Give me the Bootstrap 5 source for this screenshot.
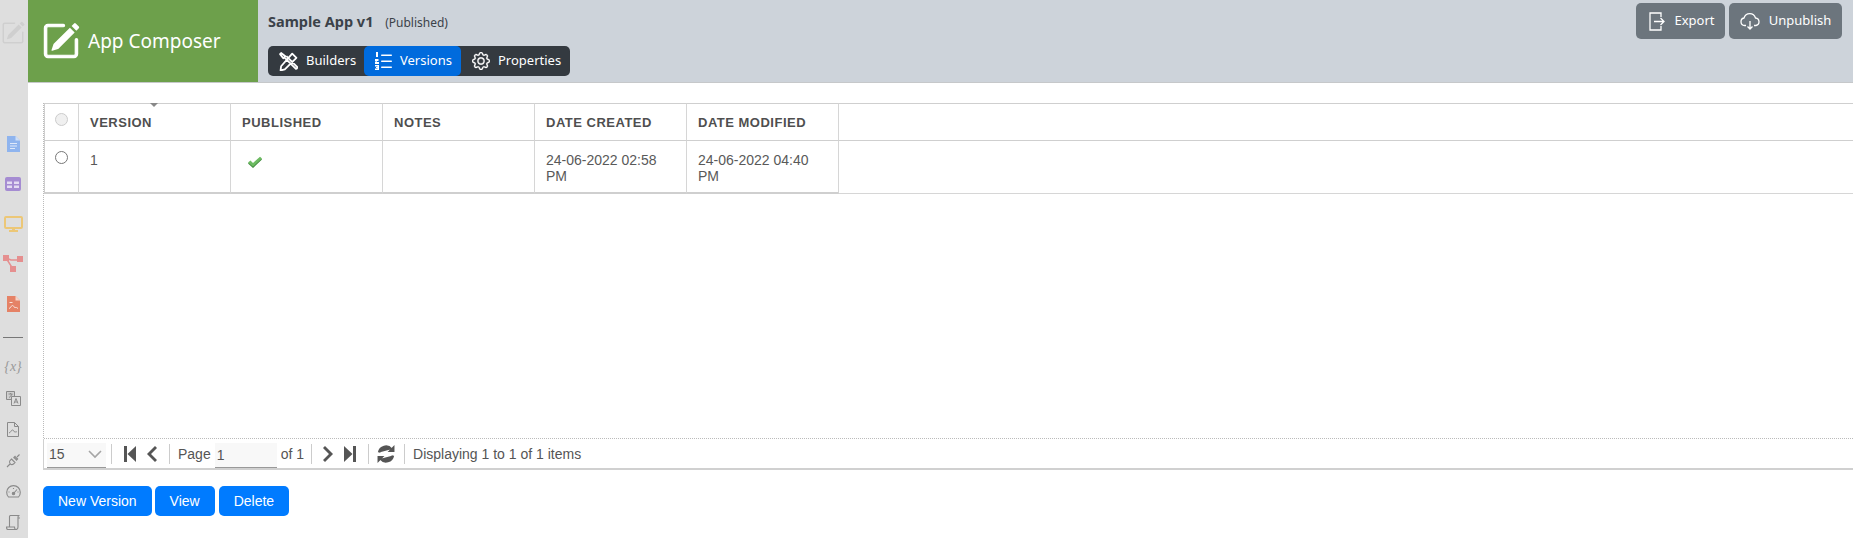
<!DOCTYPE html>
<html lang="en">
<head>
<meta charset="utf-8">
<title>App Composer</title>
<link href="https://cdn.jsdelivr.net/npm/bootstrap@5.3.0/dist/css/bootstrap.min.css" rel="stylesheet">
<style>
html,body{height:100%;overflow:hidden;background:#fff}
body{font-family:"Liberation Sans",Arial,sans-serif;font-size:14px;color:#555}
.side-rail{width:28px;background:#dedede;flex:none;height:538px;overflow:hidden;padding-right:2px}
.rail-top{height:125px;padding-top:21px}
.rail-slot{height:40px}
.rail-tool{height:31.2px}
.rail-rule{width:20px;height:1px;background:#777;margin:13px 0 14px 0;flex:none}
.top-bar{height:83px;background:#cdd3da;border-bottom:1px solid #c6c8ca;font-family:"Noto Sans","Open Sans",sans-serif}
.brand-box{width:230px;height:82px;background:#6da04b;color:#fff;padding-left:13px;gap:7px}
.brand-name{font-size:19px;line-height:1}
.app-title{font-size:14.5px;font-weight:700;color:#3b4249;line-height:20px;padding-top:11px;height:46px}
.app-state{font-size:12px;font-weight:400;margin-left:8px}
.view-tabs{height:30px;background:#343a40;border-radius:5px;overflow:hidden}
.view-tab{display:flex;align-items:center;gap:8px;height:30px;color:#fff;font-size:13px;padding:0 0 0 11px;border-radius:5px;text-decoration:none}
.view-tab.on{background:#006bdd}
.tab-a{width:96px}.tab-b{width:97px}.tab-c{width:109px}
.tab-title-col{padding-left:10px}
.act-btn{height:36px;background:#6c757d;border:0;border-radius:5px;color:#fff;font-size:13px;display:flex;align-items:center;gap:9px;padding:0;justify-content:center}
.act-export{width:89px;padding-left:3px}.act-unpub{width:113px}
.act-wrap{padding:3px 11px 0 0;gap:4px}
.grid-zone{padding:20px 0 0 15px}
.grid-box{height:367px;border-left:1px dotted #bbb;position:relative}
.grid-body{height:336px;border-bottom:1px dotted #bbb}
.data-grid{table-layout:fixed;width:100%;border-collapse:separate;border-spacing:0;margin:0}
.data-grid th,.data-grid td{border:0;padding:0;vertical-align:top;background:transparent;box-shadow:none}
.data-grid th{height:37.500px;border-top:1px solid #cfcfcf;border-bottom:1px solid #cfcfcf;border-right:1px solid #d6d6d6;font-size:13px;letter-spacing:.5px;font-weight:700;color:#4f4f4f;text-transform:uppercase;padding:11px 0 0 11px;line-height:16px}
.data-grid td{height:53px;border-bottom:2px solid #cfcfcf;border-right:1px solid #d6d6d6;font-size:14px;line-height:16px;color:#595959;padding:11px 11px 0 11px}
.data-grid .pick{padding:0;text-align:center;border-left:1px solid #cfcfcf;border-right:1px solid #d6d6d6}
.data-grid .tail{border-right:0}
.data-grid .tail-row{border-bottom:1px solid #d6d6d6;height:53px}
.col-pick{width:35px}.col-std{width:152px}
.dot-radio{display:block;width:13px;height:13px;border-radius:50%;margin:10px 0 0 10px;border:1px solid #777;background:#fff}
.dot-radio.off{border-color:#ccc;background:#f0f0f0;margin-top:9px}
.sort-mark{position:absolute;left:106px;top:0;width:0;height:0;border-left:4px solid transparent;border-right:4px solid transparent;border-top:4px solid #888}
.tick-mark{display:block;margin:4px 0 0 5px}
.pager{height:31px;border-bottom:2px solid #d0d0d0;border-left:1px solid #d0d0d0;margin-left:-1px;padding-left:3px;padding-top:1px;font-size:14px;color:#555}
.pager .form-select{width:59px;height:25px;padding:0 0 0 2px;font-size:14px;color:#555;border:0;border-bottom:1px solid #999;border-radius:0;background-color:#f8f8f8;background-image:url("data:image/svg+xml,%3Csvg xmlns='http://www.w3.org/2000/svg' viewBox='0 0 14 9'%3E%3Cpath fill='none' stroke='%23a5a5a5' stroke-width='1.600' d='M1 1l6 6 6-6'/%3E%3C/svg%3E");background-position:right 4px center;background-size:14px 9px;box-shadow:none;margin-top:2px}
.pager .form-control{width:62px;height:25px;padding:0 0 0 2px;font-size:14px;color:#555;border:0;border-bottom:1px solid #999;border-radius:0;background:#f8f8f8;box-shadow:none;margin:2px 4px 0 4px}
.pipe{width:1px;height:20px;background:#ccc;flex:none}
.pg-ico{fill:#555;display:block;flex:none}
.pg-p1{margin-left:5px}.pg-i1{margin-left:12px}.pg-i2{margin-left:11px}.pg-p2{margin-left:12px}
.pg-t1{margin-left:8px}.pg-p3{margin-left:7px}.pg-i3{margin-left:11px}.pg-i4{margin-left:11px}
.pg-p4{margin-left:12px}.pg-i5{margin-left:8px}.pg-p5{margin-left:9px}.pg-t2{margin-left:8px}
.act-row{gap:3px;padding-top:15.5px}
.blue-btn{height:30.5px;background:#007bff;border:0;border-radius:5px;color:#fff;font-size:14px;font-family:"Liberation Sans",Arial,sans-serif;padding:0 15px;line-height:30px}
.blue-gap{margin-left:1px}
.var-mark{font-family:"Liberation Serif",serif;font-style:italic;font-size:14px;color:#999;line-height:1}
</style>
</head>
<body>
<div class="d-flex">
  <aside class="side-rail d-flex flex-column align-items-center">
    <div class="rail-top">
      <svg width="24" height="24" viewBox="0 0 16 16" fill="#cfcfcf"><path d="M15.502 1.94a.5.5 0 0 1 0 .706L14.459 3.69l-2-2L13.502.646a.5.5 0 0 1 .707 0l1.293 1.293zm-1.75 2.456-2-2L4.939 9.21a.5.5 0 0 0-.121.196l-.805 2.414a.25.25 0 0 0 .316.316l2.414-.805a.5.5 0 0 0 .196-.12l6.813-6.814z"/><path fill-rule="evenodd" d="M1 13.5A1.5 1.5 0 0 0 2.5 15h11a1.5 1.5 0 0 0 1.5-1.5v-6a.5.5 0 0 0-1 0v6a.5.5 0 0 1-.5.5h-11a.5.5 0 0 1-.5-.5v-11a.5.5 0 0 1 .5-.5H9a.5.5 0 0 0 0-1H2.5A1.5 1.5 0 0 0 1 2.5v11z"/></svg>
    </div>
    <div class="rail-slot d-flex align-items-center justify-content-center">
      <svg width="13" height="16" viewBox="0 0 13 16"><path fill="#8fb4ee" d="M0 0h8.5L13 4.5V16H0z"/><path fill="#cfdff8" d="M8.5 0 13 4.500H8.500z"/><path stroke="#dfe9fa" d="M3 7.500h7M3 10h7M3 12.500h5"/></svg>
    </div>
    <div class="rail-slot d-flex align-items-center justify-content-center">
      <svg width="16" height="14" viewBox="0 0 16 14"><rect width="16" height="14" rx="2" fill="#a58cd2"/><path fill="#e4dcf2" d="M2 4.500h5V7H2zM9 4.500h5V7H9zM2 8.500h5V11H2zM9 8.500h5V11H9z"/></svg>
    </div>
    <div class="rail-slot d-flex align-items-center justify-content-center">
      <svg width="19" height="16" viewBox="0 0 19 16"><rect x="1" y="1" width="17" height="11" rx="1" fill="none" stroke="#ecc777" stroke-width="2"/><path fill="#ecc777" d="M8 12h3v2H8zM5 14h9v2H5z"/></svg>
    </div>
    <div class="rail-slot d-flex align-items-center justify-content-center">
      <svg width="20" height="17" viewBox="0 0 20 17"><path stroke="#e58f8f" stroke-width="1.400" fill="none" d="M3 3l5 2h6M3 3l7 11"/><path fill="#e58f8f" d="M0 0h6v6H0zM14 1h6v6h-6zM7 11h6v6H7z"/></svg>
    </div>
    <div class="rail-slot d-flex align-items-center justify-content-center">
      <svg width="13" height="16" viewBox="0 0 13 16"><path fill="#e58266" d="M0 0h8.500L13 4.500V16H0z"/><path fill="#f6d5ca" d="M8.500 0 13 4.500H8.500z"/><path stroke="#f8e3dc" fill="none" d="M2 12.500c2-.5 2-3 3.500-3s1 2 2.500 2 1-.5 3 1M2.500 6.500h3"/></svg>
    </div>
    <div class="rail-rule"></div>
    <div class="rail-tool d-flex align-items-center justify-content-center var-mark">{x}</div>
    <div class="rail-tool d-flex align-items-center justify-content-center">
      <svg width="15" height="15" viewBox="0 0 15 15" fill="none" stroke="#8a8a8a"><path d="M.5.500h8v8h-8z" fill="#cfcfcf"/><path d="M5.500 5.500h9v9h-9z" fill="#dedede"/><path d="M8 12.500l2-5 2 5M8.800 11h2.400M2.500 3h4M4.500 2v1M3 6.500c1.500-1 2.500-2 3-3.500"/></svg>
    </div>
    <div class="rail-tool d-flex align-items-center justify-content-center">
      <svg width="12" height="15" viewBox="0 0 12 15" fill="none" stroke="#8a8a8a"><path d="M.5.500h7l4 4v10H.500z"/><path d="M7.500.500v4h4M2 11c2-.5 2-3 3.500-3s1 2 2.500 2 1-.5 2 0"/></svg>
    </div>
    <div class="rail-tool d-flex align-items-center justify-content-center">
      <svg width="15" height="15" viewBox="0 0 15 15" fill="none" stroke="#8a8a8a" stroke-width="1.100"><path d="M5.500 6 9 9.500l-1.500 1.500a2.500 2.500 0 0 1-3.500-3.500zM4 11 1 14M7.500 5l2-2M10 7.500l2-2M8 4.500l2.500 2.500 1-1L9 3.500M11 4l2.500-2.500"/></svg>
    </div>
    <div class="rail-tool d-flex align-items-center justify-content-center">
      <svg width="15" height="13" viewBox="0 0 15 13" fill="none" stroke="#8a8a8a" stroke-width="1.100"><path d="M2.500 12a6.800 6.800 0 1 1 10 0z"/><path d="M7.500 8.500l3.500-4"/><circle cx="7.500" cy="8.500" r="1.200" fill="#8a8a8a"/><path d="M2.500 7h1M11.500 7h1M7.500 3v1"/></svg>
    </div>
    <div class="rail-tool d-flex align-items-center justify-content-center">
      <svg width="14" height="15" viewBox="0 0 14 15" fill="none" stroke="#8a8a8a" stroke-width="1.100"><path d="M3.500 11.500V1.500a1 1 0 0 1 1-1h9c-1 0-1.500.5-1.500 1.500v10c0 1.500-1 2.500-2 2.500H2c-1 0-1.500-1-1.500-2.500h8c0 1.500.5 2.500 1.500 2.500"/><path d="M12 3h2"/></svg>
    </div>
  </aside>
  <main class="flex-grow-1">
    <header class="top-bar d-flex">
      <div class="brand-box d-flex align-items-center">
        <svg width="40" height="38" viewBox="0 0 16 16" fill="#fff"><path d="M15.502 1.940a.5.5 0 0 1 0 .706L14.459 3.690l-2-2L13.502.646a.5.5 0 0 1 .707 0l1.293 1.293zm-1.750 2.456-2-2L4.939 9.210a.5.5 0 0 0-.121.196l-.805 2.414a.25.25 0 0 0 .316.316l2.414-.805a.5.5 0 0 0 .196-.120l6.813-6.814z"/><path fill-rule="evenodd" stroke="#fff" stroke-width=".5" d="M1 13.500A1.500 1.500 0 0 0 2.500 15h11a1.500 1.500 0 0 0 1.500-1.500v-6a.5.5 0 0 0-1 0v6a.5.5 0 0 1-.5.5h-11a.5.5 0 0 1-.5-.5v-11a.5.5 0 0 1 .5-.5H9a.5.5 0 0 0 0-1H2.500A1.500 1.500 0 0 0 1 2.500v11z"/></svg>
        <span class="brand-name">App Composer</span>
      </div>
      <div class="tab-title-col flex-grow-1">
        <div class="app-title">Sample App v1 <span class="app-state">(Published)</span></div>
        <nav class="view-tabs d-inline-flex">
          <a class="view-tab tab-a" href="#">
            <svg width="19" height="19" viewBox="0 0 18 18" fill="none" stroke="#fff" stroke-width="1.700" stroke-linejoin="round"><path d="M2 1 1 2l3 4 2-2zM5.500 5.500 16 16l1-.5.500-1L7 4M12.500 1.500l4 4L5.500 16.500l-4 1 .5-4z"/></svg>Builders</a>
          <a class="view-tab tab-b on" href="#">
            <svg width="17" height="18" viewBox="0 0 17 18" fill="#fff"><rect x="6" y="2.500" width="11" height="1.500" rx=".7"/><rect x="6" y="8.500" width="11" height="1.500" rx=".7"/><rect x="6" y="14.500" width="11" height="1.500" rx=".7"/><path d="M1 0h2v5H1zM0 7h3.500v2H2v1h2v2H0V9.500h1.500V9H0zM0 13h4v5H0v-1.500h2.500V16H1v-1h1.500v-.500H0z"/></svg>Versions</a>
          <a class="view-tab tab-c" href="#">
            <svg width="18" height="18" viewBox="0 0 16 16" fill="#fff" stroke="#fff" stroke-width=".3"><path d="M8 4.754a3.246 3.246 0 1 0 0 6.492 3.246 3.246 0 0 0 0-6.492zM5.754 8a2.246 2.246 0 1 1 4.492 0 2.246 2.246 0 0 1-4.492 0z"/><path d="M9.796 1.343c-.527-1.790-3.065-1.790-3.592 0l-.094.319a.873.873 0 0 1-1.255.52l-.292-.16c-1.640-.892-3.433.902-2.540 2.541l.159.292a.873.873 0 0 1-.52 1.255l-.319.094c-1.790.527-1.790 3.065 0 3.592l.319.094a.873.873 0 0 1 .52 1.255l-.16.292c-.892 1.640.901 3.434 2.541 2.540l.292-.159a.873.873 0 0 1 1.255.52l.094.319c.527 1.790 3.065 1.790 3.592 0l.094-.319a.873.873 0 0 1 1.255-.52l.292.16c1.640.893 3.434-.902 2.540-2.541l-.159-.292a.873.873 0 0 1 .52-1.255l.319-.094c1.790-.527 1.790-3.065 0-3.592l-.319-.094a.873.873 0 0 1-.52-1.255l.16-.292c.893-1.640-.902-3.433-2.541-2.540l-.292.159a.873.873 0 0 1-1.255-.52l-.094-.319zm-2.633.283c.246-.835 1.428-.835 1.674 0l.094.319a1.873 1.873 0 0 0 2.693 1.115l.291-.16c.764-.415 1.600.42 1.184 1.185l-.159.292a1.873 1.873 0 0 0 1.116 2.692l.318.094c.835.246.835 1.428 0 1.674l-.319.094a1.873 1.873 0 0 0-1.115 2.693l.16.291c.415.764-.42 1.600-1.185 1.184l-.291-.159a1.873 1.873 0 0 0-2.693 1.116l-.094.318c-.246.835-1.428.835-1.674 0l-.094-.319a1.873 1.873 0 0 0-2.692-1.115l-.292.16c-.764.415-1.600-.42-1.184-1.185l.159-.291A1.873 1.873 0 0 0 1.945 8.930l-.319-.094c-.835-.246-.835-1.428 0-1.674l.319-.094A1.873 1.873 0 0 0 3.060 4.377l-.16-.292c-.415-.764.42-1.600 1.185-1.184l.292.159a1.873 1.873 0 0 0 2.692-1.115l.094-.319z"/></svg>Properties</a>
        </nav>
      </div>
      <div class="act-wrap d-flex">
        <button class="act-btn act-export" type="button">
          <svg width="16" height="19" viewBox="0 0 16 19" fill="none" stroke="#fff" stroke-width="1.300"><path d="M12 5V1H1v17h11v-4"/><path d="M5 9.500h10M11.500 6l3.500 3.500-3.500 3.500"/></svg>Export</button>
        <button class="act-btn act-unpub" type="button">
          <svg width="20" height="17" viewBox="0 0 20 17" fill="none" stroke="#fff" stroke-width="1.300"><path d="M6 12.500H4.500a3.800 3.800 0 0 1-.5-7.500 6 6 0 0 1 11.500 0 3.800 3.800 0 0 1 .5 7.500H14"/><path d="M10 8v8M7.500 13.500 10 16l2.500-2.500"/></svg>Unpublish</button>
      </div>
    </header>
    <section class="grid-zone">
      <div class="grid-box">
        <span class="sort-mark"></span>
        <div class="grid-body">
          <table class="table data-grid">
            <colgroup><col class="col-pick"><col class="col-std"><col class="col-std"><col class="col-std"><col class="col-std"><col class="col-std"><col></colgroup>
            <thead><tr><th class="pick"><span class="dot-radio off"></span></th><th>Version</th><th>Published</th><th>Notes</th><th>Date Created</th><th>Date Modified</th><th class="tail"></th></tr></thead>
            <tbody><tr>
              <td class="pick"><span class="dot-radio"></span></td>
              <td>1</td>
              <td><svg class="tick-mark" width="16" height="13" viewBox="0 0 16 13"><path fill="#3f8a3c" d="M1 7.500 3.500 5.500 6 8 13 1.800 15 3.500 6 12z"/><path fill="#6dbb62" d="M1 6.500 3.500 4.500 6 7 13 .8 15 2.500 6 10.700z"/></svg></td>
              <td></td>
              <td>24-06-2022 02:58 PM</td>
              <td>24-06-2022 04:40 PM</td>
              <td class="tail tail-row"></td>
            </tr></tbody>
          </table>
        </div>
        <div class="pager d-flex align-items-center">
          <select class="form-select" aria-label="Page size"><option>15</option></select>
          <span class="pipe pg-p1"></span>
          <svg class="pg-ico pg-i1" width="12" height="16" viewBox="0 0 12 16"><path d="M0 0h3v16H0zM12 0v16L3.500 8z"/></svg>
          <svg class="pg-ico pg-i2" width="10" height="16" viewBox="0 0 10 16"><path d="M8 0l2 2-6 6 6 6-2 2L0 8z"/></svg>
          <span class="pipe pg-p2"></span>
          <span class="pg-t1">Page</span>
          <input class="form-control" value="1" aria-label="Page">
          <span>of 1</span>
          <span class="pipe pg-p3"></span>
          <svg class="pg-ico pg-i3" width="10" height="16" viewBox="0 0 10 16"><path d="M2 0l8 8-8 8-2-2 6-6-6-6z"/></svg>
          <svg class="pg-ico pg-i4" width="12" height="16" viewBox="0 0 12 16"><path d="M0 0v16l8.500-8zM9 0h3v16H9z"/></svg>
          <span class="pipe pg-p4"></span>
          <svg class="pg-ico pg-i5" width="18" height="18" viewBox="0 0 17 17" fill="none" stroke="#555" stroke-width="2.400"><path d="M2 7a6.500 6.500 0 0 1 11.500-3M15 10a6.500 6.500 0 0 1-11.500 3"/><path fill="#555" stroke="none" d="M16.500 0v6.500H10zM.5 17v-6.500H7z"/></svg>
          <span class="pipe pg-p5"></span>
          <span class="pg-t2">Displaying 1 to 1 of 1 items</span>
        </div>
      </div>
      <div class="act-row d-flex">
        <button class="blue-btn" type="button">New Version</button>
        <button class="blue-btn" type="button">View</button>
        <button class="blue-btn blue-gap" type="button">Delete</button>
      </div>
    </section>
  </main>
</div>
</body>
</html>
